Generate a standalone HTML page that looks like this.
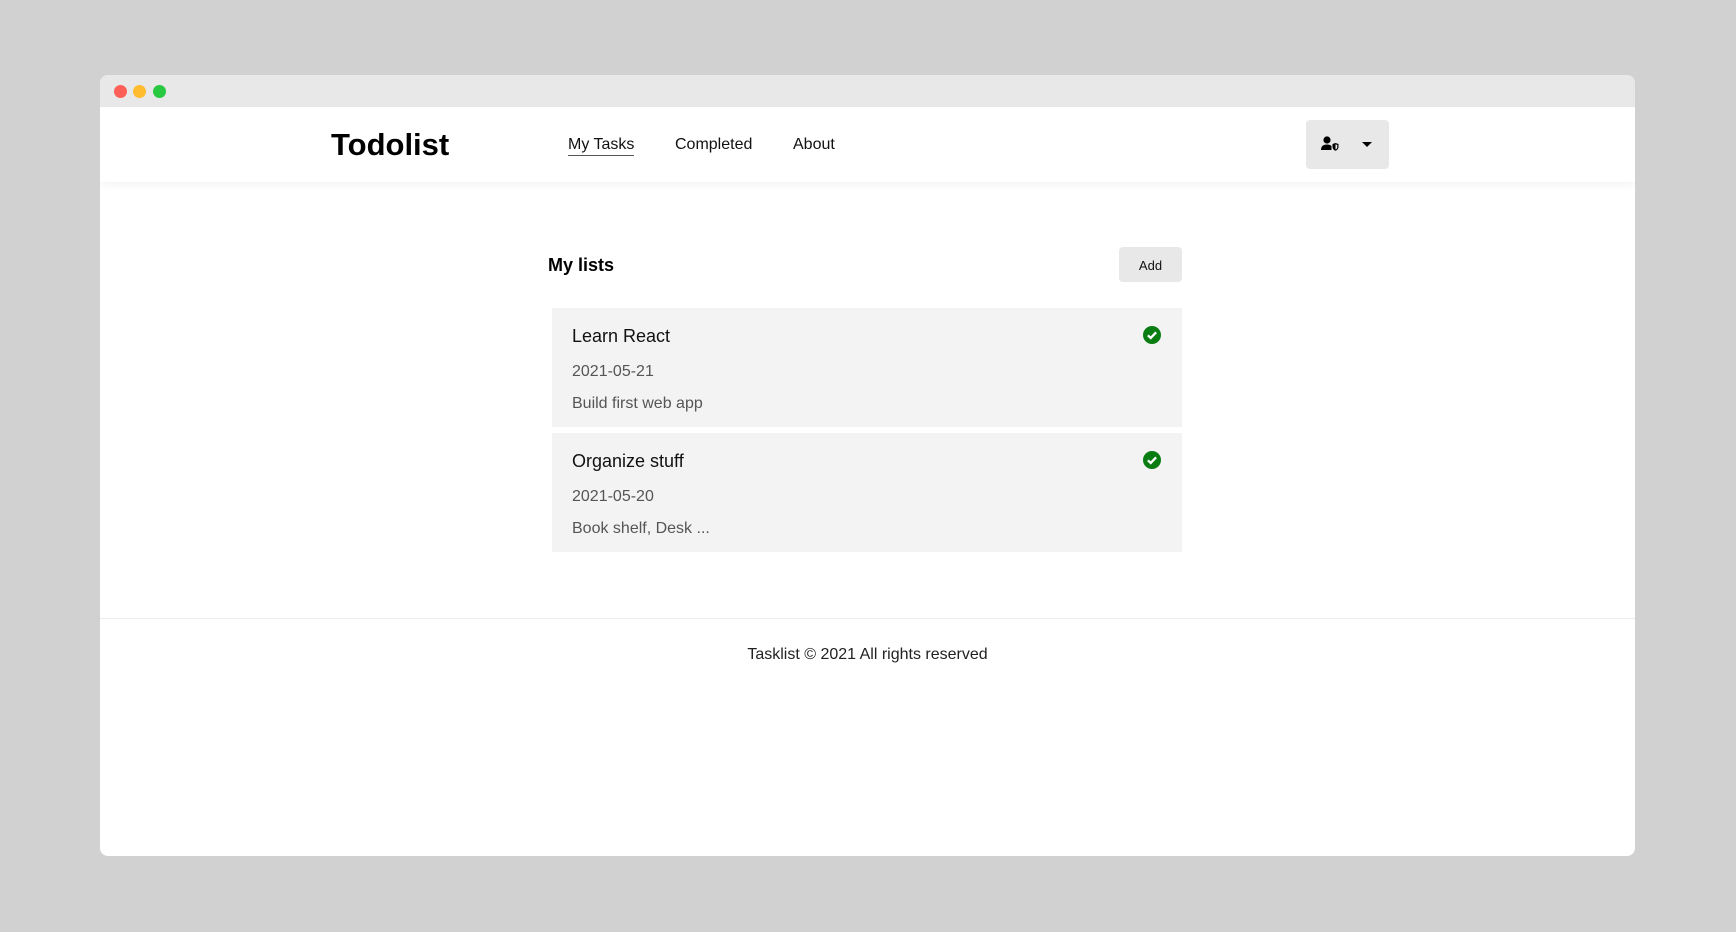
<!DOCTYPE html>
<html><head><meta charset="utf-8"><style>
*{box-sizing:border-box;margin:0;padding:0}
body{width:1736px;height:932px;background:#d1d1d1;font-family:"Liberation Sans",sans-serif;position:relative;overflow:hidden;color:#111}
.win{position:absolute;left:100px;top:75px;width:1535px;height:781px;background:#fff;border-radius:8px;overflow:hidden}
.tb{position:absolute;left:0;top:0;right:0;height:32px;background:#e8e8e8}
.dot{position:absolute;top:10px;width:13px;height:13px;border-radius:50%}
.hd{position:absolute;left:0;top:32px;right:0;height:75px;background:#fff;box-shadow:0 3px 8px rgba(0,0,0,0.05)}
.a{position:absolute;white-space:nowrap}
.card{position:absolute;left:452px;width:630px;height:119px;background:#f3f3f3}
.t{position:absolute;left:20px;font-size:18px;color:#111}
.d{position:absolute;left:20px;font-size:16px;color:#555}
.chk{position:absolute;left:591px;width:18px;height:18px;border-radius:50%;background:#0a7d12}
</style></head><body>
<div class="win">
<div class="tb">
<div class="dot" style="left:14px;background:#fe5f57"></div>
<div class="dot" style="left:33px;background:#febc2e"></div>
<div class="dot" style="left:53px;background:#28c840"></div>
</div>
<div class="hd">
<div class="a" style="left:231px;top:20px;font-size:31px;font-weight:bold;color:#000">Todolist</div>
<div class="a" style="left:468px;top:29px;font-size:16px;border-bottom:1px solid #555;padding-bottom:1px">My Tasks</div>
<div class="a" style="left:575px;top:29px;font-size:16px">Completed</div>
<div class="a" style="left:693px;top:29px;font-size:16px">About</div>
<div class="a" style="left:1206px;top:13px;width:83px;height:49px;background:#e8e8e8;border-radius:4px">
<svg style="position:absolute;left:15px;top:16px" width="18" height="15" viewBox="0 0 18 15"><circle cx="6" cy="4" r="3.6" fill="#000"/><path d="M0 14 Q0 8.5 6 8.5 Q9 8.5 10.5 10 L10.5 14 Z" fill="#000"/><path d="M11.5 8 L14.5 7 L17.5 8 L17.5 11 Q17.5 13.5 14.5 14.8 Q11.5 13.5 11.5 11 Z" fill="#000"/><path d="M14.5 8.3 L16.3 9 L16.3 11 Q16.3 12.8 14.5 13.5 Z" fill="#e8e8e8"/></svg>
<div style="position:absolute;left:56px;top:22px;width:0;height:0;border-left:5px solid transparent;border-right:5px solid transparent;border-top:5px solid #000"></div>
</div>
</div>
<div class="a" style="left:448px;top:180px;font-size:18px;font-weight:bold;color:#000">My lists</div>
<div class="a" style="left:1019px;top:172px;width:63px;height:35px;background:#e8e8e8;border-radius:4px;font-size:13px;text-align:center;line-height:37px">Add</div>
<div class="card" style="top:233px">
<div class="t" style="top:18px">Learn React</div>
<div class="d" style="top:55px">2021-05-21</div>
<div class="d" style="top:87px">Build first web app</div>
<div class="chk" style="top:18px"><svg width="18" height="18" viewBox="0 0 17 17"><path d="M4.6 8.8 L7.3 11.3 L12.4 6" stroke="#fff" stroke-width="2.2" fill="none"/></svg></div>
</div>
<div class="card" style="top:358px">
<div class="t" style="top:18px">Organize stuff</div>
<div class="d" style="top:55px">2021-05-20</div>
<div class="d" style="top:87px">Book shelf, Desk ...</div>
<div class="chk" style="top:18px"><svg width="18" height="18" viewBox="0 0 17 17"><path d="M4.6 8.8 L7.3 11.3 L12.4 6" stroke="#fff" stroke-width="2.2" fill="none"/></svg></div>
</div>
<div class="a" style="left:0;right:0;top:543px;border-top:1px solid #ececec"></div>
<div class="a" style="left:0;width:1535px;top:571px;text-align:center;font-size:16px;color:#222">Tasklist © 2021 All rights reserved</div>
</div>
</body></html>
